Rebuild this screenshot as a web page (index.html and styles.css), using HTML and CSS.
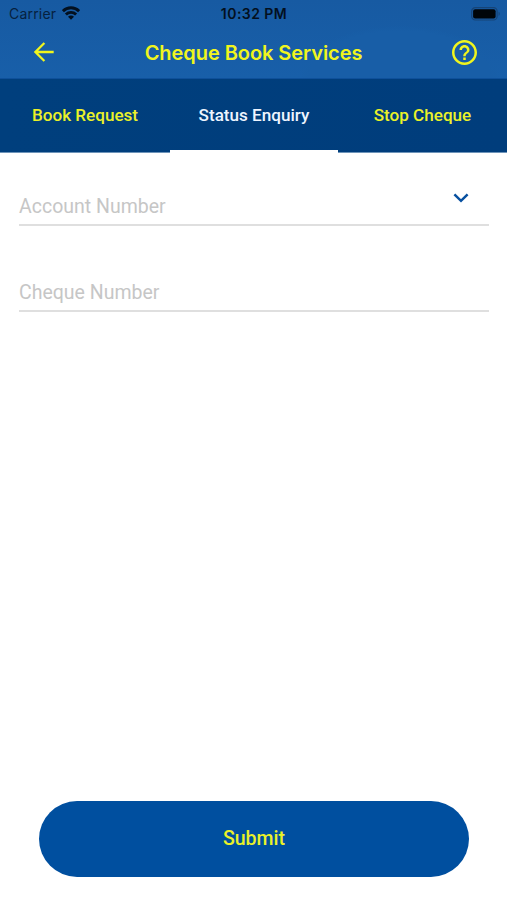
FILE: index.html
```
<!DOCTYPE html>
<html lang="en">
<head>
<meta charset="utf-8">
<title>Cheque Book Services</title>
<link rel="stylesheet" href="styles.css">
</head>
<body>
<div class="screen">
  <header class="header">
    <div class="status">
      <div class="carrier"><span>Carrier</span>
        <svg class="wifi" viewBox="0 0 18 14" width="18" height="14"><g fill="none" stroke="#03101f" stroke-width="2.9"><path d="M.9 5.100a11.600 11.600 0 0 1 16.200 0"/><path d="M3.900 8.500a7.300 7.300 0 0 1 10.200 0"/></g><path fill="#03101f" d="M9 13.800 6 10.700a4.200 4.200 0 0 1 6 0z"/></svg>
      </div>
      <span class="time">10:32 PM</span>
      <svg class="battery" viewBox="0 0 30 14" width="30" height="14"><rect x=".7" y=".7" width="25.4" height="12.3" rx="3.6" fill="none" stroke="#164477" stroke-width="1.200"/><rect x="2.100" y="2.200" width="22.500" height="9.300" rx="2" fill="#000509"/><path fill="#164477" d="M27.600 4.800c1.500.5 1.500 3.600 0 4.100z"/></svg>
    </div>
    <div class="titlebar">
      <svg class="back" viewBox="0 0 20 20" width="20" height="20"><path d="M19.700 10H1.600M10.400 1 1.400 10l9 9" fill="none" stroke="#f0f51d" stroke-width="2.300"/></svg>
      <h1 class="title">Cheque Book Services</h1>
      <svg class="help" viewBox="2 2 20 20" width="25" height="25"><path fill="#f0f51d" d="M11 18h2v-2h-2v2zm1-16C6.480 2 2 6.480 2 12s4.480 10 10 10 10-4.480 10-10S17.520 2 12 2zm0 18c-4.410 0-8-3.590-8-8s3.590-8 8-8 8 3.590 8 8-3.590 8-8 8zm0-14c-2.210 0-4 1.790-4 4h2c0-1.100.9-2 2-2s2 .9 2 2c0 2-3 1.750-3 5h2c0-2.250 3-2.500 3-5 0-2.210-1.790-4-4-4z"/></svg>
    </div>
  </header>
  <nav class="tabs">
    <div class="tab"><span>Book Request</span></div>
    <div class="tab active"><span>Status Enquiry</span></div>
    <div class="tab"><span>Stop Cheque</span></div>
  </nav>
  <main class="form">
    <div class="field"><span>Account Number</span>
      <svg class="chevron" viewBox="0 0 16 10" width="16" height="10"><path d="m1.400 1.400 6.600 6.400 6.600-6.400" fill="none" stroke="#0750a0" stroke-width="2.500"/></svg>
    </div>
    <div class="field"><span>Cheque Number</span></div>
  </main>
  <button class="submit">Submit</button>
</div>
</body>
</html>
```

FILE: styles.css
```
* { box-sizing: border-box; }
body { margin: 0; background: #fff; }
.screen { width: 507px; height: 900px; display: flex; flex-direction: column; font-family: Roboto, sans-serif; overflow: hidden; }
.header {
  height: 79px;
  background:
    radial-gradient(ellipse 100px 50px at 400px 76px, #185ea7 0 90%, transparent),
    linear-gradient(#175aa2, #185fa9);
  border-bottom: 1px solid #0e509a;
}
.status { height: 28px; padding: 0 6px 0 9px; display: grid; grid-template-columns: 1fr auto 1fr; align-items: center; font: 14px/28px Inter, sans-serif; color: #03101f; }
.carrier { display: flex; align-items: center; gap: 6px; }
.carrier span { letter-spacing: .2px; color: #06213f; }
.wifi { margin-top: -3px; }
.time { font-weight: 600; font-size: 14px; letter-spacing: .45px; margin-right: 2px; }
.battery { justify-self: end; }
.titlebar { height: 49px; padding: 0 30px 0 34px; display: grid; grid-template-columns: 58px 1fr 58px; align-items: center; }
.back { margin-top: -2px; }
.title { margin: 0; padding-top: 1px; text-align: center; font: 600 20px/49px Inter, sans-serif; letter-spacing: -.06px; color: #f0f51d; white-space: nowrap; margin-right: 4px; }
.help { justify-self: end; margin-top: -2px; }
.tabs { height: 74px; display: grid; grid-template-columns: 170px 168px 1fr; background: linear-gradient(90deg, #003f7d, #003d7c); border-bottom: 1px solid #6e94b9; }
.tab { display: flex; align-items: center; justify-content: center; padding-top: 1px; border-bottom: 3px solid transparent; color: #eaf129; font-size: 17.1px; font-weight: 500; }
.tab.active { color: #eef5ff; border-color: #fff; margin-bottom: -1px; padding-top: 0; }
.form { padding: 33px 18px 0 19px; display: flex; flex-direction: column; gap: 46px; }
.field { height: 40px; border-bottom: 2px solid #dfdfdf; display: flex; justify-content: space-between; font-size: 19.5px; line-height: 41px; color: #c6c6c6; }
.chevron { margin: 7px 20px 0 0; }
.submit { margin: auto 38px 23px 39px; height: 76px; padding: 0 0 1px; border: 0; border-radius: 38px; background: #004f9f; color: #eaf129; font: 500 19.500px Roboto, sans-serif; }
```
